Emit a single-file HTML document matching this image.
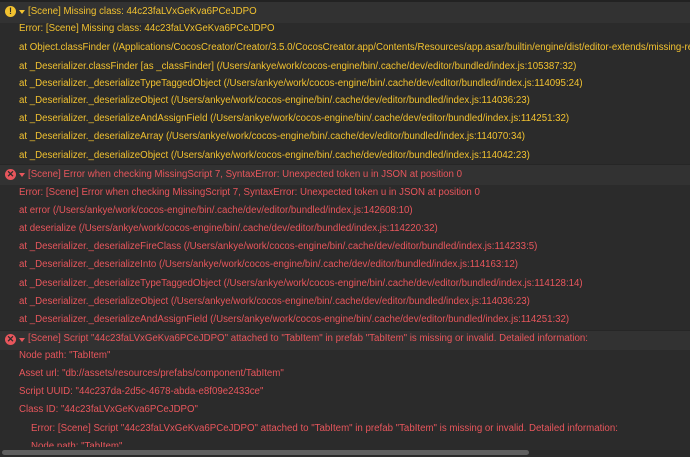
<!DOCTYPE html><html><head><style>
html,body{margin:0;width:690px;height:457px;overflow:hidden;background:#2b2b2b;font-family:"Liberation Sans",sans-serif;font-size:9.7px}
.r{position:absolute;left:19px;white-space:nowrap;line-height:14px;max-width:671px;overflow:hidden}
.y{color:#f2c230}.e{color:#e8565c}
.band{position:absolute;left:0;width:690px;background:#323232;border-top:1px solid #262626}
.ic{position:absolute;left:5px;width:11px;height:11px;border-radius:50%;text-align:center;font-weight:bold;font-size:9px;line-height:11px;color:#2b2b2b}
.ar{position:absolute;left:19px;width:0;height:0;border-left:3.5px solid transparent;border-right:3.5px solid transparent}
</style></head><body>
<div class="band" style="top:0;height:21px;border-top:2px solid #222"></div>
<div class="ic" style="top:6px;background:#f2c230">!</div><div class="ar" style="top:10px;border-top:4px solid #f2c230"></div>
<div class="r y" style="left:28px;top:5px">[Scene] Missing class: 44c23faLVxGeKva6PCeJDPO</div>
<div class="r y" style="top:22px">Error: [Scene] Missing class: 44c23faLVxGeKva6PCeJDPO</div>
<div class="r y" style="top:41px">at Object.classFinder (/Applications/CocosCreator/Creator/3.5.0/CocosCreator.app/Contents/Resources/app.asar/builtin/engine/dist/editor-extends/missing-re</div>
<div class="r y" style="top:60px">at _Deserializer.classFinder [as _classFinder] (/Users/ankye/work/cocos-engine/bin/.cache/dev/editor/bundled/index.js:105387:32)</div>
<div class="r y" style="top:77px">at _Deserializer._deserializeTypeTaggedObject (/Users/ankye/work/cocos-engine/bin/.cache/dev/editor/bundled/index.js:114095:24)</div>
<div class="r y" style="top:94px">at _Deserializer._deserializeObject (/Users/ankye/work/cocos-engine/bin/.cache/dev/editor/bundled/index.js:114036:23)</div>
<div class="r y" style="top:112px">at _Deserializer._deserializeAndAssignField (/Users/ankye/work/cocos-engine/bin/.cache/dev/editor/bundled/index.js:114251:32)</div>
<div class="r y" style="top:130px">at _Deserializer._deserializeArray (/Users/ankye/work/cocos-engine/bin/.cache/dev/editor/bundled/index.js:114070:34)</div>
<div class="r y" style="top:149px">at _Deserializer._deserializeObject (/Users/ankye/work/cocos-engine/bin/.cache/dev/editor/bundled/index.js:114042:23)</div>
<div class="band" style="top:164px;height:20px"></div>
<div class="ic" style="top:169px;background:#e8565c">✕</div><div class="ar" style="top:173px;border-top:4px solid #e8565c"></div>
<div class="r e" style="left:28px;top:168px">[Scene] Error when checking MissingScript 7, SyntaxError: Unexpected token u in JSON at position 0</div>
<div class="r e" style="top:186px">Error: [Scene] Error when checking MissingScript 7, SyntaxError: Unexpected token u in JSON at position 0</div>
<div class="r e" style="top:204px">at error (/Users/ankye/work/cocos-engine/bin/.cache/dev/editor/bundled/index.js:142608:10)</div>
<div class="r e" style="top:222px">at deserialize (/Users/ankye/work/cocos-engine/bin/.cache/dev/editor/bundled/index.js:114220:32)</div>
<div class="r e" style="top:240px">at _Deserializer._deserializeFireClass (/Users/ankye/work/cocos-engine/bin/.cache/dev/editor/bundled/index.js:114233:5)</div>
<div class="r e" style="top:258px">at _Deserializer._deserializeInto (/Users/ankye/work/cocos-engine/bin/.cache/dev/editor/bundled/index.js:114163:12)</div>
<div class="r e" style="top:277px">at _Deserializer._deserializeTypeTaggedObject (/Users/ankye/work/cocos-engine/bin/.cache/dev/editor/bundled/index.js:114128:14)</div>
<div class="r e" style="top:295px">at _Deserializer._deserializeObject (/Users/ankye/work/cocos-engine/bin/.cache/dev/editor/bundled/index.js:114036:23)</div>
<div class="r e" style="top:313px">at _Deserializer._deserializeAndAssignField (/Users/ankye/work/cocos-engine/bin/.cache/dev/editor/bundled/index.js:114251:32)</div>
<div class="band" style="top:330px;height:19px"></div>
<div class="ic" style="top:334px;background:#e8565c">✕</div><div class="ar" style="top:338px;border-top:4px solid #e8565c"></div>
<div class="r e" style="left:28px;top:332px">[Scene] Script "44c23faLVxGeKva6PCeJDPO" attached to "TabItem" in prefab "TabItem" is missing or invalid. Detailed information:</div>
<div class="r e" style="top:349px">Node path: "TabItem"</div>
<div class="r e" style="top:367px">Asset url: "db://assets/resources/prefabs/component/TabItem"</div>
<div class="r e" style="top:385px">Script UUID: "44c237da-2d5c-4678-abda-e8f09e2433ce"</div>
<div class="r e" style="top:403px">Class ID: "44c23faLVxGeKva6PCeJDPO"</div>
<div class="r e" style="left:31px;top:422px">Error: [Scene] Script "44c23faLVxGeKva6PCeJDPO" attached to "TabItem" in prefab "TabItem" is missing or invalid. Detailed information:</div>
<div class="r e" style="left:31px;top:440px">Node path: "TabItem"</div>
<div style="position:absolute;left:0;top:447px;width:690px;height:10px;background:#2b2b2b"></div>
<div style="position:absolute;left:2px;top:450px;width:527px;height:5px;border-radius:3px;background:#5f5f5f"></div>
</body></html>
